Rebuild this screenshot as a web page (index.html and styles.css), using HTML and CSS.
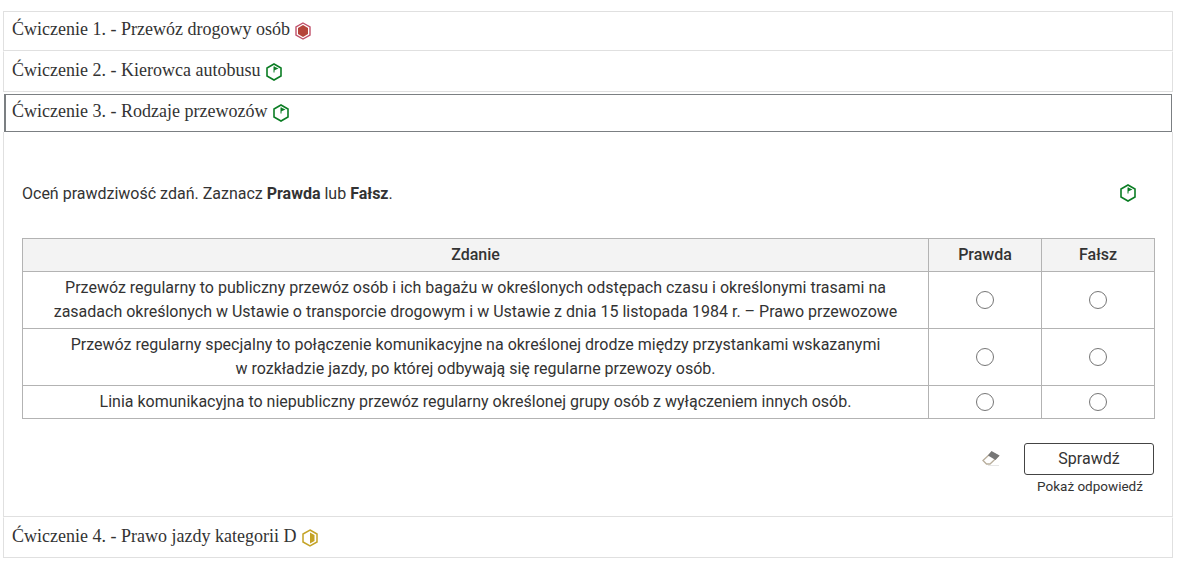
FILE: index.html
```html
<!DOCTYPE html>
<html lang="pl">
<head>
<meta charset="utf-8">
<title>Ćwiczenia</title>
<link rel="stylesheet" href="styles.css">
</head>
<body>
<div class="accordion">
  <div class="head first">Ćwiczenie 1. - Przewóz drogowy osób
    <svg class="hex" viewBox="0 0 16 18"><path d="M8 1 15 5v8l-7 4-7-4V5z" fill="#fff" stroke="#c0506a" stroke-width="1.400"/><path d="M8 3 13 6v6l-5 3-5-3V6z" fill="#b5443a"/></svg>
  </div>
  <div class="head">Ćwiczenie 2. - Kierowca autobusu
    <svg class="hex" viewBox="0 0 16 18"><path d="M8 1 15 5v8l-7 4-7-4V5z" fill="#fff" stroke="#0b7d24" stroke-width="1.600"/><path d="M8 3.500 12.500 5.500 8 7.500z" fill="#0b7d24"/><path d="M8 3.500v6" stroke="#0b7d24"/></svg>
  </div>
  <div class="head active">Ćwiczenie 3. - Rodzaje przewozów
    <svg class="hex" viewBox="0 0 16 18"><path d="M8 1 15 5v8l-7 4-7-4V5z" fill="#fff" stroke="#0b7d24" stroke-width="1.600"/><path d="M8 3.500 12.500 5.500 8 7.500z" fill="#0b7d24"/><path d="M8 3.500v6" stroke="#0b7d24"/></svg>
  </div>
  <div class="panel">
    <div class="task">
      <p class="lead">Oceń prawdziwość zdań. Zaznacz <b>Prawda</b> lub <b>Fałsz</b>.</p>
      <svg class="hex flag" viewBox="0 0 16 18"><path d="M8 1 15 5v8l-7 4-7-4V5z" fill="#fff" stroke="#0b7d24" stroke-width="1.600"/><path d="M8 3.500 12.500 5.500 8 7.500z" fill="#0b7d24"/><path d="M8 3.500v6" stroke="#0b7d24"/></svg>
    </div>
    <table>
      <thead>
        <tr><th>Zdanie</th><th class="col">Prawda</th><th class="col">Fałsz</th></tr>
      </thead>
      <tbody>
        <tr>
          <td>Przewóz regularny to publiczny przewóz osób i ich bagażu w określonych odstępach czasu i określonymi trasami na<br>zasadach określonych w Ustawie o transporcie drogowym i w Ustawie z dnia 15 listopada 1984 r. – Prawo przewozowe</td>
          <td><span class="radio"></span></td><td><span class="radio"></span></td>
        </tr>
        <tr>
          <td>Przewóz regularny specjalny to połączenie komunikacyjne na określonej drodze między przystankami wskazanymi<br>w rozkładzie jazdy, po której odbywają się regularne przewozy osób.</td>
          <td><span class="radio"></span></td><td><span class="radio"></span></td>
        </tr>
        <tr>
          <td>Linia komunikacyjna to niepubliczny przewóz regularny określonej grupy osób z wyłączeniem innych osób.</td>
          <td><span class="radio"></span></td><td><span class="radio"></span></td>
        </tr>
      </tbody>
    </table>
    <div class="actions">
      <svg class="eraser" viewBox="0 0 18 16"><path d="M1 10.500 9.500 2.500 16.500 6 8 14H4.500z" fill="#fff" stroke="#b8ae9c" stroke-width="1.300"/><path d="M9.500 1 17.500 5.500 13.500 10 6 5.500z" fill="#777"/><path d="M6 15.500h11" stroke="#e6e6e6"/></svg>
      <div class="buttons">
        <button type="button" class="check">Sprawdź</button>
        <span class="answer">Pokaż odpowiedź</span>
      </div>
    </div>
  </div>
  <div class="head last">Ćwiczenie 4. - Prawo jazdy kategorii D
    <svg class="hex" viewBox="0 0 16 18"><path d="M8 1 15 5v8l-7 4-7-4V5z" fill="#fff" stroke="#c4a326" stroke-width="1.500"/><path d="M8 3.500 12.500 6v6L8 14.500z" fill="#c4a326"/></svg>
  </div>
</div>
</body>
</html>
```
FILE: styles.css
```css
* { box-sizing: border-box; }
html, body { margin: 0; background: #fff; }
body { font-family: Roboto, sans-serif; color: #333; overflow: hidden; height: 575px; }
.accordion { display: flex; flex-direction: column; width: 1170px; margin: 11px 0 0 3px; }
.head {
  height: 41px;
  padding: 7px 8px 0 8px;
  border: 1px solid #e0e0e0;
  border-top-color: #fff;
  font: 18px/22px "Liberation Serif", serif;
  color: #333;
  white-space: nowrap;
}
.first { height: 40px; padding-top: 6px; border-top-color: #e0e0e0; }
.active { height: 38px; margin: 2px 1px 0; border: 1px solid #7b7f82; border-left-width: 2px; padding: 5px 8px 0 6px; }
.hex { width: 16px; height: 18px; vertical-align: -5px; margin-left: 1px; }
.panel {
  height: 385px;
  padding: 52px 18px 0 18px;
  border: 1px solid #e0e0e0;
  border-top: 0;
}
.task { display: flex; justify-content: space-between; align-items: center; padding-right: 18px; height: 20px; margin-bottom: 34px; }
.flag { margin-bottom: 2px; }
.lead { margin: 0; font-size: 16px; line-height: 20px; }
table { width: 1133px; border-collapse: collapse; font-size: 16px; line-height: 24px; table-layout: fixed; }
th, td { border: 1px solid #b3b3b3; text-align: center; padding: 4px 8px; font-weight: 400; }
th { background: #f3f3f3; font-weight: 500; height: 33px; padding: 3px 8px 4px; }
.col { width: 113px; }
.radio { display: block; width: 18px; height: 18px; margin: 0 auto; border: 1px solid #767676; border-radius: 50%; }
.actions { display: flex; justify-content: flex-end; align-items: flex-start; margin-top: 24px; }
.eraser { width: 18px; height: 16px; margin: 7px 24px 0 0; }
.buttons { display: flex; flex-direction: column; align-items: center; width: 130px; }
.check {
  width: 130px;
  height: 32px;
  padding: 0 0 2px;
  border: 1px solid #444;
  border-radius: 3px;
  background: #fff;
  color: #333;
  font: 16px Roboto, sans-serif;
}
.answer { font-size: 13.500px; line-height: 20px; margin-top: 1px; padding-left: 2px; }
```
